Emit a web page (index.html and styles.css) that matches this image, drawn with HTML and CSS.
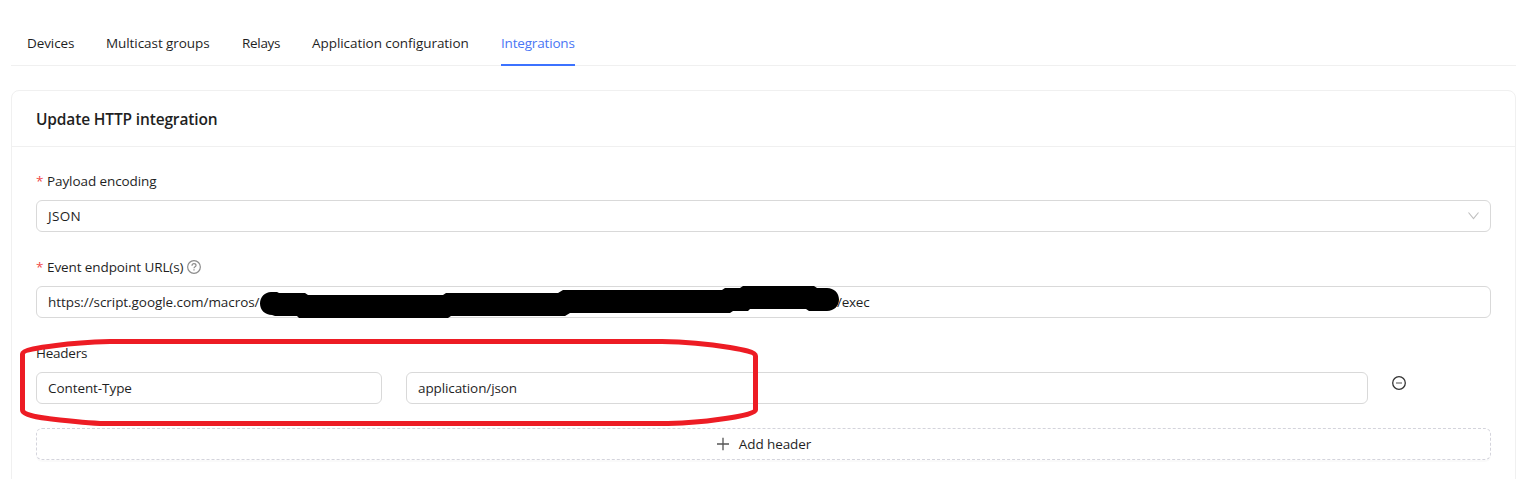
FILE: index.html
```html
<!DOCTYPE html>
<html lang="en">
<head>
<meta charset="utf-8">
<title>Update HTTP integration</title>
<link rel="stylesheet" href="styles.css">
</head>
<body>
<main class="page">
  <nav class="tabs">
    <a class="tab tab-devices">Devices</a>
    <a class="tab tab-multicast">Multicast groups</a>
    <a class="tab tab-relays">Relays</a>
    <a class="tab tab-config">Application configuration</a>
    <a class="tab tab-integrations active">Integrations</a>
  </nav>
  <section class="card">
    <h1 class="card-title"><span>Update HTTP integration</span></h1>
    <form class="form">
      <div class="field">
        <div class="label"><i class="required">*</i><span class="t-payload">Payload encoding</span></div>
        <div class="input"><span class="t-json">JSON</span>
          <svg class="chevron" viewBox="0 0 12 12"><path d="M1.500 2.500 6.500 8.700l5-6.200"/></svg>
        </div>
      </div>
      <div class="field">
        <div class="label"><i class="required">*</i><span class="t-event">Event endpoint URL(s)</span>
          <svg class="help" viewBox="0 0 14 14"><circle cx="7" cy="7" r="6.35"/><path d="M5 5.7c0-1.2.8-2 2-2s2 .8 2 1.8c0 1.4-2 1.3-2 2.8"/><path d="M7 9.3v1.2"/></svg>
        </div>
        <div class="input"><span class="t-url">https://script.google.com/macros/</span><span class="t-exec">/exec</span></div>
      </div>
      <div class="field">
        <div class="label"><span class="t-headers">Headers</span></div>
        <div class="header-row">
          <div class="input"><span class="t-type">Content-Type</span></div>
          <div class="input"><span class="t-app">application/json</span></div>
          <svg class="remove" viewBox="0 0 14 14"><circle cx="7" cy="7" r="6.3"/><path class="bar" d="M4 7h6"/></svg>
        </div>
      </div>
      <div class="add">
        <svg class="plus" viewBox="0 0 14 14"><path d="M7 .8v12.4M1 7h12"/></svg>
        <span class="t-add">Add header</span>
      </div>
    </form>
  </section>
  <svg class="markup" viewBox="0 0 1516 479">
    <path class="redaction" d="M271 292H277L279 293H305L308 295H443L446 293H558L563 290H722L725 288H740L743 286H814L817 288H827C834 288 839 293 839 299.500S834 311 827 311H809L806 309H750L748 311H733L730 313H570L565 316H451L448 318H299L297 316H275L272 315C265 315 260 310 260 303.500S265 292 271 292Z"/>
    <path class="highlight" d="M110 341.500H662C690 342 714 345 730 347.500C742 349.500 755.500 352 755.500 356V410C755.500 414 735 417.500 718 419.500C705 421.500 686 423 668 423.500H105C85 423 65 420.500 48 418.500C34 417 22.500 414 22.500 410V354C22.500 350 40 347.500 56 345.500C70 343.500 90 342 110 341.500Z"/>
  </svg>
</main>
</body>
</html>
```
FILE: styles.css
```css
* { box-sizing: border-box; }
body { margin: 0; background: #fff; color: #1f1f1f; font: 13.5px/22px "Open Sans", "Noto Sans", sans-serif; overflow: hidden; }
span { white-space: nowrap; }
.page { position: relative; height: 479px; padding: 20px 0 0 11px; overflow: hidden; }
.tabs { display: flex; gap: 32px; height: 46px; padding-left: 16px; border-bottom: 1px solid #f0f0f0; }
.tab { height: 46px; padding-top: 12px; white-space: nowrap; letter-spacing: -.25px; }
.tab-devices { width: 47px; letter-spacing: -.1px; }
.tab-multicast { width: 104px; letter-spacing: -.07px; }
.tab-relays { width: 38px; letter-spacing: -.3px; }
.tab-config { width: 157px; letter-spacing: -.05px; }
.tab-integrations { width: 74px; letter-spacing: -.18px; }
.active { color: #4a76f5; border-bottom: 2px solid #3c72ff; }
.card { width: 1505px; height: 420px; margin-top: 24px; border: 1px solid #f0f0f0; border-radius: 8px; }
.card-title { height: 56px; margin: 0; padding: 16px 24px; border-bottom: 1px solid #f0f0f0; font-size: 15.5px; font-weight: 600; line-height: 24px; letter-spacing: -.15px; }
.form { padding: 23px 24px; }
.field { height: 86px; }
.label { display: flex; align-items: center; height: 22px; margin-bottom: 8px; letter-spacing: -.25px; }
.required { width: 11px; color: #f0484a; font-style: normal; }
.t-payload { letter-spacing: -.09px; }
.t-event { letter-spacing: -.1px; }
.t-json { letter-spacing: .3px; }
.help { width: 14px; height: 14px; margin-left: 4px; fill: none; stroke: #8c8c8c; stroke-width: 1.200; }
.input { display: flex; align-items: center; height: 32px; padding: 0 11px; border: 1px solid #d9d9d9; border-radius: 6px; letter-spacing: -.25px; }
.chevron { width: 12px; height: 12px; margin-left: auto; fill: none; stroke: #bfbfbf; stroke-width: 1.100; }
.t-url { width: 789px; flex: none; letter-spacing: -.06px; }
.t-type { letter-spacing: -.08px; }
.t-app { letter-spacing: -.1px; }
.header-row { display: grid; grid-template-columns: 346px 962px 16px; column-gap: 24px; }
.remove { width: 14px; height: 14px; margin-top: 4px; fill: none; stroke: #333; stroke-width: 1.300; }
.remove .bar { stroke: #777; }
.add { display: flex; align-items: center; justify-content: center; gap: 9px; height: 32px; border: 1px dashed #d4d4dc; border-radius: 6px; box-shadow: 0 2px 0 rgba(0,0,0,.02); letter-spacing: -.1px; }
.plus { width: 14px; height: 14px; fill: none; stroke: #555; stroke-width: 1.300; }
.markup { position: absolute; left: 0; top: 0; width: 1516px; height: 479px; pointer-events: none; }
.redaction { fill: #000; }
.highlight { fill: none; stroke: #ed1c24; stroke-width: 5; }
```
